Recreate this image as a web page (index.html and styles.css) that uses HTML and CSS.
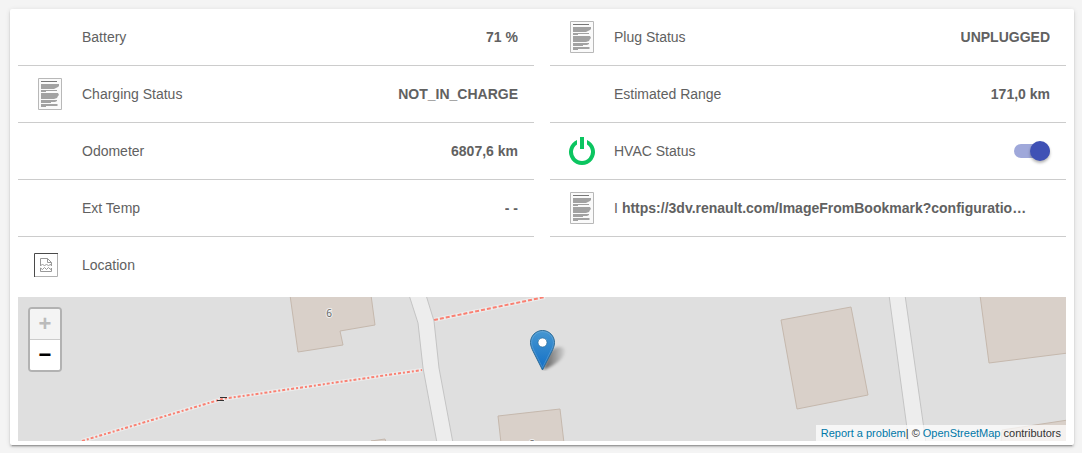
FILE: index.html
```
<!DOCTYPE html>
<html lang="en">
<head>
    <meta charset="utf-8">
    <title>Car</title>
    <link rel="stylesheet" href="styles.css">
</head>
<body>
    <!-- shared text document icon -->
    <svg class="defs" width="0" height="0">
        <symbol id="doc" viewBox="0 0 24 32">
            <path d="M.5.5h23v31H.5z" fill="#fafafa" stroke="#b8b8b8"/>
            <path d="M3 3.500h16" stroke="#777"/>
            <path d="M3 6h18v2l-1 1-2 1-2 1H3zM3 12h16v1H8v1H3zM3 15h17l1 2-1 1-1 2-3 1H3zM3 22h16v1l-2 1h-4v1H3zM3 26h16l1 1-1 1H8v1H3z" fill="#a2a2a2"/>
        </symbol>
    </svg>

    <main class="card">
        <div class="rows">
            <div class="row">
                <div class="icon"></div>
                <div class="label">Battery</div>
                <div class="value">71 %</div>
            </div>
            <div class="row">
                <div class="icon"><svg width="24" height="32"><use href="#doc"/></svg></div>
                <div class="label">Plug Status</div>
                <div class="value">UNPLUGGED</div>
            </div>
            <div class="row">
                <div class="icon"><svg width="24" height="32"><use href="#doc"/></svg></div>
                <div class="label">Charging Status</div>
                <div class="value">NOT_IN_CHARGE</div>
            </div>
            <div class="row">
                <div class="icon"></div>
                <div class="label">Estimated Range</div>
                <div class="value">171,0 km</div>
            </div>
            <div class="row">
                <div class="icon"></div>
                <div class="label">Odometer</div>
                <div class="value">6807,6 km</div>
            </div>
            <div class="row">
                <div class="icon">
                    <svg width="32" height="32" viewBox="0 0 32 32" fill="#0bc560">
                        <path d="M11 5v4.500A9 9 0 1 0 21 9.500V5A13 13 0 1 1 11 5z"/>
                        <path d="M14 2h4v12h-4z"/>
                    </svg>
                </div>
                <label class="label" for="hvac">HVAC Status</label>
                <input class="switch" type="checkbox" id="hvac" checked>
            </div>
            <div class="row">
                <div class="icon"></div>
                <div class="label">Ext Temp</div>
                <div class="value">- -</div>
            </div>
            <div class="row">
                <div class="icon"><svg width="24" height="32"><use href="#doc"/></svg></div>
                <div class="label label-short">I</div>
                <div class="value">https://3dv.renault.com/ImageFromBookmark?configuratio…</div>
            </div>
        </div>

        <div class="row row-map">
            <div class="icon icon-missing">
                <svg width="24" height="24" viewBox="0 0 24 24" fill="none">
                    <path d="M23.500 1v22.500H1" stroke="#b0b0b0"/>
                    <path d="M.5 24V.5H24" stroke="#4a4a4a"/>
                    <path d="M6.500 13V5.500h7l4 4V13M13.500 5.500v4h4M6.500 13l2-2 2 2 2-2 2 2 2-2 1 2M6.500 18.500V15l2 1.500 2-2 2 2 2-2 2 2 1-1.500v3.500z" stroke="#999"/>
                </svg>
            </div>
            <div class="label">Location</div>
        </div>

        <div class="map">
            <svg class="tiles" viewBox="0 0 1048 144" preserveAspectRatio="xMidYMid slice">
                <g class="building">
                    <path d="M272-2l8 57 45-7-3-14 35-6-4-30z"/>
                    <path d="M353 144l14-2 1 3z"/>
                    <path d="M480 119l62-7 4 34h-63z"/>
                    <path d="M763 23l70-13 17 88-71 14z"/>
                    <path d="M962-2l9 68 79-10V-2z"/>
                    <path d="M983 146l1-13 66-10v23z"/>
                </g>
                <g class="path-case">
                    <path d="M64 144l140-42 200-29"/>
                    <path d="M416 23L527 0"/>
                </g>
                <path class="footway" d="M64 144l140-42 200-29"/>
                <path class="path" d="M416 23L527 0"/>
                <g class="road">
                    <path d="M391-2l9 28 5 45 14 75h16l-14-75-5-47-8-26z"/>
                    <path d="M871-2l20 148h17L887-2z"/>
                </g>
                <path d="M202 100.500h7M199 103.500h7" stroke="#333"/>
                <text x="311" y="20">6</text>
                <text x="514" y="151">8</text>
            </svg>
            <svg class="marker" width="46" height="41" viewBox="0 0 46 41">
                <defs>
                    <linearGradient id="pin" x2="0" y2="1">
                        <stop offset="0" stop-color="#4697d1"/>
                        <stop offset="1" stop-color="#126fc6"/>
                    </linearGradient>
                    <linearGradient id="shade" x2="1" y2="0">
                        <stop offset="0" stop-color="#000" stop-opacity=".6"/>
                        <stop offset="1" stop-color="#000" stop-opacity=".05"/>
                    </linearGradient>
                    <filter id="blur" x="-30%" y="-30%" width="160%" height="160%"><feGaussianBlur stdDeviation="1.500"/></filter>
                </defs>
                <path d="M13 40L19 23C23 16 34 15 35 20C36 27 26 35 13 40z" fill="url(#shade)" filter="url(#blur)"/>
                <path d="M12.500.5C5.800.5.5 6 .5 12.500C.5 16 2 19 3.200 21.500L12.500 40L21.800 21.500C23 19 24.500 16 24.500 12.500C24.500 6 19.200.5 12.500.5z" fill="url(#pin)" stroke="#2e6c97"/>
                <path d="M12.500 1.600C6.400 1.600 1.600 6.600 1.600 12.500C1.600 15.700 3 18.600 4.200 21L12.500 37.500L20.800 21C22 18.600 23.400 15.700 23.400 12.500C23.400 6.600 18.600 1.600 12.500 1.600z" fill="none" stroke="#fff" stroke-opacity=".15"/>
                <circle cx="12.500" cy="12.500" r="4.500" fill="#fff" stroke="#2e6c97" stroke-opacity=".7"/>
            </svg>
            <div class="zoom">
                <button type="button" aria-label="Zoom in" disabled>+</button>
                <button type="button" aria-label="Zoom out">−</button>
            </div>
            <div class="attribution"><a href="#">Report a problem</a>| © <a href="#">OpenStreetMap</a> contributors</div>
        </div>
    </main>
</body>
</html>
```
FILE: styles.css
```
body {
    margin: 0;
    padding: 9px 8px 8px 10px;
    background-color: #f4f4f4;
    color: #616161;
    font-family: "Liberation Sans", Arial, sans-serif;
    font-size: 14px;
    line-height: 20px;
}

.defs {
    position: absolute;
}

.card {
    padding: 0 8px 4px;
    background-color: #fff;
    border-radius: 2px;
    box-shadow: 0 2px 2px 0 rgba(0, 0, 0, 0.14), 0 3px 1px -2px rgba(0, 0, 0, 0.2), 0 1px 5px 0 rgba(0, 0, 0, 0.12);
}

.rows {
    display: grid;
    grid-template-columns: 1fr 1fr;
    column-gap: 16px;
}

.row {
    display: flex;
    align-items: center;
    box-sizing: border-box;
    min-width: 0;
    height: 57px;
    padding: 0 16px;
    border-bottom: 1px solid #ccc;
}

.row-map {
    height: 56px;
    border-bottom: none;
}

.icon {
    display: flex;
    justify-content: center;
    flex: none;
    width: 32px;
    margin-right: 16px;
}

.icon-missing {
    justify-content: flex-start;
}

.label {
    flex: 1;
    white-space: nowrap;
}

.label-short {
    flex: none;
    margin-right: 4px;
}

.value {
    font-weight: bold;
    white-space: nowrap;
    overflow: hidden;
    text-overflow: ellipsis;
}

.switch {
    appearance: none;
    position: relative;
    width: 36px;
    height: 14px;
    margin: 0;
    border-radius: 14px;
    background-color: rgba(0, 0, 0, 0.26);
    cursor: pointer;
}

.switch::before {
    content: "";
    position: absolute;
    top: -3px;
    left: 0;
    width: 20px;
    height: 20px;
    border-radius: 50%;
    background-color: #fafafa;
    box-shadow: 0 2px 3px rgba(0, 0, 0, 0.3);
}

.switch:checked {
    background-color: #9fa8da;
}

.switch:checked::before {
    left: 16px;
    background-color: #3f51b5;
}

/* map */
.map {
    position: relative;
    height: 144px;
    margin-top: 4px;
    background-color: #dfdfdf;
    overflow: hidden;
}

.tiles {
    display: block;
    width: 100%;
    height: 100%;
}

.building {
    fill: #d9d0c9;
    stroke: #c5b8ad;
}

.road {
    fill: #ededed;
    stroke: #c4c4c4;
}

.path-case {
    fill: none;
    stroke: #ececec;
    stroke-width: 4px;
}

.path,
.footway {
    fill: none;
    stroke: #fa8072;
    stroke-width: 2px;
    stroke-dasharray: 4 2;
}

.footway {
    stroke-dasharray: 3 2 2 2;
}

.tiles text {
    font-family: "Noto Sans", sans-serif;
    font-size: 10px;
    text-anchor: middle;
    fill: #666;
    stroke: #eee;
    stroke-width: 2px;
    paint-order: stroke;
}

.marker {
    position: absolute;
    top: 33px;
    left: calc(50% - 12px);
}

.zoom {
    position: absolute;
    top: 10px;
    left: 10px;
    border: 2px solid rgba(0, 0, 0, 0.2);
    border-radius: 4px;
    background-color: #fff;
    background-clip: padding-box;
}

.zoom button {
    display: block;
    box-sizing: content-box;
    width: 30px;
    height: 30px;
    padding: 0;
    border: none;
    border-radius: 0 0 2px 2px;
    background-color: #fff;
    color: #000;
    font: bold 22px/30px "Liberation Sans", Arial, sans-serif;
    cursor: pointer;
}

.zoom button:disabled {
    border-bottom: 1px solid #ccc;
    border-radius: 2px 2px 0 0;
    background-color: #f4f4f4;
    color: #bbb;
    cursor: default;
}

.attribution {
    position: absolute;
    right: 0;
    bottom: 0;
    padding: 0 5px;
    background-color: rgba(255, 255, 255, 0.7);
    color: #333;
    font-size: 11px;
    line-height: 16px;
}

.attribution a {
    color: #0078a8;
    text-decoration: none;
}
```
